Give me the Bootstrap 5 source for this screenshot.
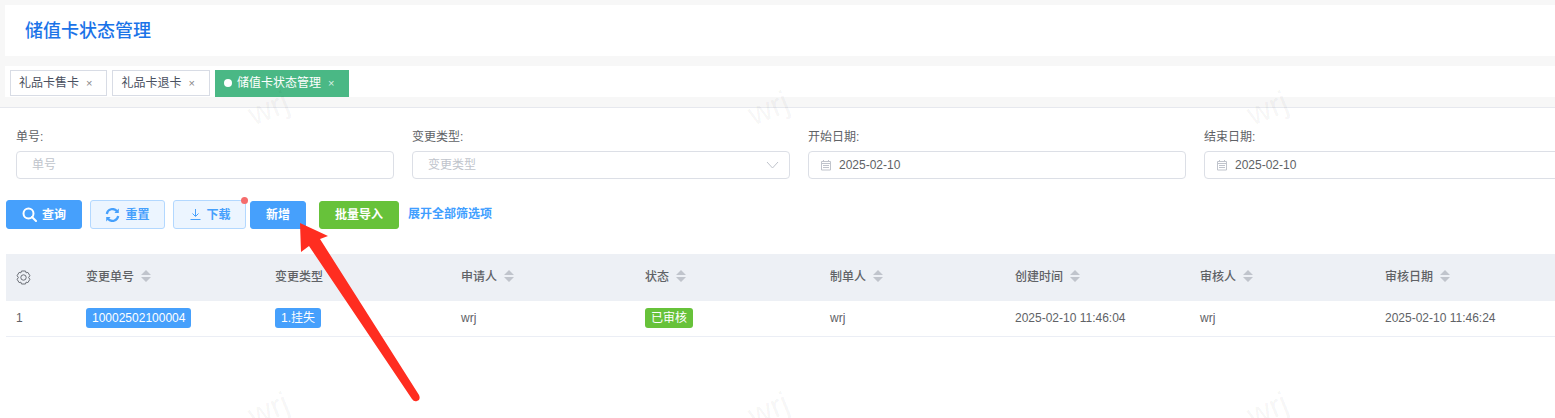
<!DOCTYPE html>
<html lang="zh-CN">
<head>
  <meta charset="UTF-8" />
  <meta name="viewport" content="width=device-width, initial-scale=1" />
  <title>储值卡状态管理</title>
  <link href="https://cdn.jsdelivr.net/npm/bootstrap@5.3.0/dist/css/bootstrap.min.css" rel="stylesheet" />
  <style>
    html, body { height: 418px; overflow: hidden; }
    body { background: #f7f7f7; font-family: "Liberation Sans", "Noto Sans CJK SC", sans-serif; font-size: 12px; color: #606266; padding-top: 5px; position: relative; }
    .title-bar { background: #fff; height: 51px; margin: 0 0 10px 5px; padding-left: 20px; font-size: 18px; font-weight: 500; line-height: 53px; color: #1a73e8; }
    .tabs-bar { background: #fff; height: 31px; margin-left: 5px; padding-left: 5px; gap: 5px; }
    .tab-item { height: 26px; border: 1px solid #d8dce5; background: #fff; color: #495060; padding: 0 14px 0 8px; line-height: 25px; margin-top: 4px; }
    .tab-item .tab-x { font-size: 11px; color: #888; margin-left: 7px; }
    .tab-on { background: #4ab885; border-color: #4ab885; color: #fff; height: 27px; padding-right: 14px; }
    .tab-on .tab-x { color: #d8f0e4; margin-left: 7px; }
    .tab-dot { width: 8px; height: 8px; border-radius: 50%; background: #fff; margin-right: 5px; display: inline-block; }
    .main-area { background: #fff; margin-top: 10px; border-top: 1px solid #e6e8ee; height: 311px; }
    .filter-grid { display: grid; grid-template-columns: repeat(4, 378px); column-gap: 18px; padding: 20px 0 0 16px; }
    .filter-label { color: #606266; line-height: 18px; margin-bottom: 5px; }
    .filter-box { height: 28px; border: 1px solid #dcdfe6; border-radius: 4px; padding: 0 10px 0 15px; line-height: 26px; color: #606266; }
    .filter-box .hint { color: #c0c4cc; }
    .filter-date { padding-left: 11px; gap: 7px; }
    .action-row { margin: 21px 0 0 6px; height: 29px; }
    .act-btn { border: 1px solid #46a0fc; background: #46a0fc; color: #fff; border-radius: 3px; font-weight: 700; height: 29px; padding: 0; gap: 5px; font-size: 12px; }
    .act-btn.lite { background: #ecf5ff; border-color: #b3d8ff; color: #46a0fc; }
    .act-query { width: 76px; margin-right: 8px; }
    .act-reset { width: 75px; margin-right: 8px; }
    .act-down { width: 73px; margin-right: 4px; padding-left: 2px; position: relative; }
    .act-down .red-dot { position: absolute; top: -4px; right: -3px; width: 7px; height: 7px; border-radius: 50%; background: #f56c6c; }
    .act-add { width: 56px; height: 28px; margin: 1px 13px 0 0; }
    .act-import { width: 80px; height: 28px; margin: 1px 9px 0 0; background: #67c23a; border-color: #67c23a; }
    .act-more { color: #409eff; font-weight: 700; line-height: 29px; }
    .data-wrap { margin: 25px 0 0 6px; }
    .data-table { table-layout: fixed; width: 1549px; border-collapse: collapse; }
    .data-table th { background: #edf0f5; height: 47px; font-weight: 500; color: #606266; padding: 0 0 1px; white-space: nowrap; }
    .data-table td { height: 35px; padding: 0; border-bottom: 1px solid #ebeef5; color: #606266; white-space: nowrap; }
    .data-table .first-cell { padding-left: 10px; }
    .sort-mark { display: inline-block; vertical-align: -1px; margin-left: 7px; }
    .num-tag { display: inline-block; background: #46a0fc; color: #fff; border-radius: 3px; padding: 0 6px; height: 20px; line-height: 20px; font-size: 12px; vertical-align: middle; }
    .num-tag.ok { background: #67c23a; }
    .wm-text { position: absolute; font-size: 32px; color: rgba(0, 0, 0, .05); transform: rotate(-22deg); pointer-events: none; line-height: 1; }
    .arrow-over { position: absolute; left: 0; top: 0; pointer-events: none; }
  </style>
</head>
<body>

  <div class="title-bar">储值卡状态管理</div>

  <!-- tabs -->
  <div class="tabs-bar d-flex">
    <div class="tab-item">礼品卡售卡<span class="tab-x">×</span></div>
    <div class="tab-item">礼品卡退卡<span class="tab-x">×</span></div>
    <div class="tab-item tab-on"><span class="tab-dot"></span>储值卡状态管理<span class="tab-x">×</span></div>
  </div>

  <div class="main-area">

    <!-- filters -->
    <div class="filter-grid">
      <div>
        <div class="filter-label">单号:</div>
        <div class="filter-box"><span class="hint">单号</span></div>
      </div>
      <div>
        <div class="filter-label">变更类型:</div>
        <div class="filter-box d-flex justify-content-between align-items-center">
          <span class="hint">变更类型</span>
          <svg width="13" height="8" viewBox="0 0 13 8" fill="none" stroke="#c0c4cc"><path d="M1 1l5.5 6L12 1"/></svg>
        </div>
      </div>
      <div>
        <div class="filter-label">开始日期:</div>
        <div class="filter-box filter-date d-flex align-items-center">
          <svg width="12" height="12" viewBox="0 0 12 12" fill="none" stroke="#c0c4cc"><path d="M1.5 2.5h9v8.500h-9zM1.5 4.5h9M3.5 1v2M8.5 1v2M3 6.5h6M3 8.5h6"/></svg>
          <span>2025-02-10</span>
        </div>
      </div>
      <div>
        <div class="filter-label">结束日期:</div>
        <div class="filter-box filter-date d-flex align-items-center">
          <svg width="12" height="12" viewBox="0 0 12 12" fill="none" stroke="#c0c4cc"><path d="M1.5 2.5h9v8.500h-9zM1.5 4.5h9M3.5 1v2M8.5 1v2M3 6.5h6M3 8.5h6"/></svg>
          <span>2025-02-10</span>
        </div>
      </div>
    </div>

    <!-- buttons -->
    <div class="action-row d-flex align-items-start">
      <button class="btn act-btn act-query d-flex align-items-center justify-content-center">
        <svg width="15" height="15" viewBox="0 0 15 15" fill="none" stroke="#fff" stroke-width="2"><circle cx="6.5" cy="6.5" r="5"/><path d="M10 10l4 4" stroke-linecap="round"/></svg>查询
      </button>
      <button class="btn act-btn lite act-reset d-flex align-items-center justify-content-center">
        <svg width="15" height="14" viewBox="0 0 15 14" fill="none" stroke="#46a0fc" stroke-width="2.2"><path d="M1.8 6A5.8 5.8 0 0 1 12 3.2M13.2 8A5.8 5.8 0 0 1 3 10.8"/><path d="M13.8 .6v4.400H9.400zM1.200 13.400V9h4.400z" fill="#46a0fc" stroke="none"/></svg>重置
      </button>
      <button class="btn act-btn lite act-down d-flex align-items-center justify-content-center">
        <svg width="11" height="11" viewBox="0 0 11 11" fill="none" stroke="#46a0fc"><path d="M5.5 0v7M2.5 4.5l3 3 3-3M.5 10.500h10"/></svg><span>下载</span>
        <span class="red-dot"></span>
      </button>
      <button class="btn act-btn act-add">新增</button>
      <button class="btn act-btn act-import">批量导入</button>
      <span class="act-more">展开全部筛选项</span>
    </div>

    <!-- table -->
    <div class="data-wrap">
      <table class="data-table">
        <colgroup>
          <col style="width:80px"><col style="width:189px"><col style="width:186px"><col style="width:184px"><col style="width:185px"><col style="width:185px"><col style="width:185px"><col style="width:185px"><col>
        </colgroup>
        <thead>
          <tr>
            <th class="first-cell">
              <svg width="15" height="15" viewBox="0 0 15 15" fill="none" stroke="#6b6f76"><path d="M5.5 1h4l.6 1.800 1.800-.4 2 3.300-1.300 1.800 1.300 1.800-2 3.300-1.800-.4-.6 1.800h-4l-.6-1.800-1.800.4-2-3.300L2.400 7.500 1.100 5.700l2-3.300 1.800.4z"/><circle cx="7.500" cy="7.500" r="2.700"/></svg>
            </th>
            <th>变更单号<svg class="sort-mark" width="10" height="12" viewBox="0 0 10 12" fill="#c0c4cc"><path d="M5 0l5 5H0zM5 12L0 7h10z"/></svg></th>
            <th>变更类型</th>
            <th>申请人<svg class="sort-mark" width="10" height="12" viewBox="0 0 10 12" fill="#c0c4cc"><path d="M5 0l5 5H0zM5 12L0 7h10z"/></svg></th>
            <th>状态<svg class="sort-mark" width="10" height="12" viewBox="0 0 10 12" fill="#c0c4cc"><path d="M5 0l5 5H0zM5 12L0 7h10z"/></svg></th>
            <th>制单人<svg class="sort-mark" width="10" height="12" viewBox="0 0 10 12" fill="#c0c4cc"><path d="M5 0l5 5H0zM5 12L0 7h10z"/></svg></th>
            <th>创建时间<svg class="sort-mark" width="10" height="12" viewBox="0 0 10 12" fill="#c0c4cc"><path d="M5 0l5 5H0zM5 12L0 7h10z"/></svg></th>
            <th>审核人<svg class="sort-mark" width="10" height="12" viewBox="0 0 10 12" fill="#c0c4cc"><path d="M5 0l5 5H0zM5 12L0 7h10z"/></svg></th>
            <th>审核日期<svg class="sort-mark" width="10" height="12" viewBox="0 0 10 12" fill="#c0c4cc"><path d="M5 0l5 5H0zM5 12L0 7h10z"/></svg></th>
          </tr>
        </thead>
        <tbody>
          <tr>
            <td class="first-cell">1</td>
            <td><span class="num-tag">10002502100004</span></td>
            <td><span class="num-tag">1.挂失</span></td>
            <td>wrj</td>
            <td><span class="num-tag ok">已审核</span></td>
            <td>wrj</td>
            <td>2025-02-10 11:46:04</td>
            <td>wrj</td>
            <td>2025-02-10 11:46:24</td>
          </tr>
        </tbody>
      </table>
    </div>
  </div>

  <!-- watermark -->
  <span class="wm-text" style="left:248px;top:92px">wrj</span>
  <span class="wm-text" style="left:748px;top:92px">wrj</span>
  <span class="wm-text" style="left:1247px;top:92px">wrj</span>
  <span class="wm-text" style="left:248px;top:393px">wrj</span>
  <span class="wm-text" style="left:748px;top:393px">wrj</span>
  <span class="wm-text" style="left:1247px;top:393px">wrj</span>

  <!-- annotation arrow -->
  <svg class="arrow-over" width="1555" height="418" viewBox="0 0 1555 418">
    <path d="M300 223L328 236L320 239L419 395Q421 400 417 401Q414 402 412 399L309 246L301 252Z" fill="#ff2d20"/>
  </svg>

</body>
</html>
